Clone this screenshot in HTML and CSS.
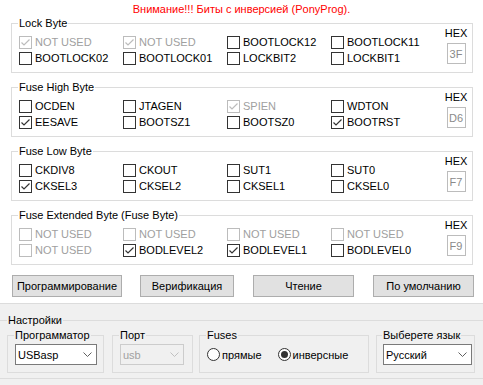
FILE: index.html
```html
<!DOCTYPE html>
<html>
<head>
<meta charset="utf-8">
<link rel="stylesheet" href="styles.css">
</head>
<body>
<div class="app">
  <div class="title">Внимание!!! Биты с инверсией (PonyProg).</div>

  <fieldset class="grp">
    <legend>Lock Byte</legend>
    <div class="bits">
      <label class="cb dis"><span class="box"><svg viewBox="0 0 11 11"><polyline points="1.5,5.5 4,8 9.5,2.5"/></svg></span>NOT USED</label>
      <label class="cb dis"><span class="box"><svg viewBox="0 0 11 11"><polyline points="1.5,5.5 4,8 9.5,2.5"/></svg></span>NOT USED</label>
      <label class="cb"><span class="box"></span>BOOTLOCK12</label>
      <label class="cb"><span class="box"></span>BOOTLOCK11</label>
      <label class="cb"><span class="box"></span>BOOTLOCK02</label>
      <label class="cb"><span class="box"></span>BOOTLOCK01</label>
      <label class="cb"><span class="box"></span>LOCKBIT2</label>
      <label class="cb"><span class="box"></span>LOCKBIT1</label>
    </div>
    <div class="hex"><div class="hex-l">HEX</div><div class="hex-v">3F</div></div>
  </fieldset>

  <fieldset class="grp">
    <legend>Fuse High Byte</legend>
    <div class="bits">
      <label class="cb"><span class="box"></span>OCDEN</label>
      <label class="cb"><span class="box"></span>JTAGEN</label>
      <label class="cb dis"><span class="box"><svg viewBox="0 0 11 11"><polyline points="1.5,5.5 4,8 9.5,2.5"/></svg></span>SPIEN</label>
      <label class="cb"><span class="box"></span>WDTON</label>
      <label class="cb"><span class="box"><svg viewBox="0 0 11 11"><polyline points="1.5,5.5 4,8 9.5,2.5"/></svg></span>EESAVE</label>
      <label class="cb"><span class="box"></span>BOOTSZ1</label>
      <label class="cb"><span class="box"></span>BOOTSZ0</label>
      <label class="cb"><span class="box"><svg viewBox="0 0 11 11"><polyline points="1.5,5.5 4,8 9.5,2.5"/></svg></span>BOOTRST</label>
    </div>
    <div class="hex"><div class="hex-l">HEX</div><div class="hex-v">D6</div></div>
  </fieldset>

  <fieldset class="grp">
    <legend>Fuse Low Byte</legend>
    <div class="bits">
      <label class="cb"><span class="box"></span>CKDIV8</label>
      <label class="cb"><span class="box"></span>CKOUT</label>
      <label class="cb"><span class="box"></span>SUT1</label>
      <label class="cb"><span class="box"></span>SUT0</label>
      <label class="cb"><span class="box"><svg viewBox="0 0 11 11"><polyline points="1.5,5.5 4,8 9.5,2.5"/></svg></span>CKSEL3</label>
      <label class="cb"><span class="box"></span>CKSEL2</label>
      <label class="cb"><span class="box"></span>CKSEL1</label>
      <label class="cb"><span class="box"></span>CKSEL0</label>
    </div>
    <div class="hex"><div class="hex-l">HEX</div><div class="hex-v">F7</div></div>
  </fieldset>

  <fieldset class="grp">
    <legend>Fuse Extended Byte (Fuse Byte)</legend>
    <div class="bits">
      <label class="cb dis"><span class="box"></span>NOT USED</label>
      <label class="cb dis"><span class="box"></span>NOT USED</label>
      <label class="cb dis"><span class="box"></span>NOT USED</label>
      <label class="cb dis"><span class="box"></span>NOT USED</label>
      <label class="cb dis"><span class="box"></span>NOT USED</label>
      <label class="cb"><span class="box"><svg viewBox="0 0 11 11"><polyline points="1.5,5.5 4,8 9.5,2.5"/></svg></span>BODLEVEL2</label>
      <label class="cb"><span class="box"><svg viewBox="0 0 11 11"><polyline points="1.5,5.5 4,8 9.5,2.5"/></svg></span>BODLEVEL1</label>
      <label class="cb"><span class="box"></span>BODLEVEL0</label>
    </div>
    <div class="hex"><div class="hex-l">HEX</div><div class="hex-v">F9</div></div>
  </fieldset>

  <div class="btns">
    <button class="btn b1">Программирование</button>
    <button class="btn b2">Верификация</button>
    <button class="btn b3">Чтение</button>
    <button class="btn b4">По умолчанию</button>
  </div>

  <div class="panel">
    <fieldset class="settings">
      <legend>Настройки</legend>
      <div class="srow">
        <fieldset class="sg sg-prog">
          <legend>Программатор</legend>
          <div class="combo w-prog"><span>USBasp</span><svg class="chev" viewBox="0 0 9 5"><polyline points="0.5,0.5 4.5,4.5 8.5,0.5"/></svg></div>
        </fieldset>
        <fieldset class="sg sg-port">
          <legend>Порт</legend>
          <div class="combo dis w-port"><span>usb</span><svg class="chev" viewBox="0 0 9 5"><polyline points="0.5,0.5 4.5,4.5 8.5,0.5"/></svg></div>
        </fieldset>
        <fieldset class="sg sg-fuses">
          <legend>Fuses</legend>
          <div class="radios">
            <label class="rb"><span class="circle"></span>прямые</label>
            <label class="rb"><span class="circle on"></span>инверсные</label>
          </div>
        </fieldset>
        <fieldset class="sg sg-lang">
          <legend>Выберете язык</legend>
          <div class="combo w-lang"><span>Русский</span><svg class="chev" viewBox="0 0 9 5"><polyline points="0.5,0.5 4.5,4.5 8.5,0.5"/></svg></div>
        </fieldset>
      </div>
    </fieldset>
  </div>
</div>
</body>
</html>
```

FILE: styles.css
```css
* { box-sizing: border-box; }
html, body { margin: 0; padding: 0; }
body {
  width: 483px;
  height: 385px;
  overflow: hidden;
  background: #ffffff;
  font-family: "Liberation Sans", Arial, sans-serif;
  font-size: 11px;
  color: #000;
}
.app { display: flex; flex-direction: column; height: 385px; }

.title {
  color: #ff0000;
  text-align: center;
  height: 17px;
  line-height: 13px;
  padding-top: 3px;
}

.grp {
  margin: 0 10px 8px 11px;
  padding: 6px 4px 7px 7px;
  border: 1px solid #dcdcdc;
  height: 56px;
  min-width: 0;
  display: flex;
  align-items: flex-start;
}
.grp legend {
  padding: 0 1px;
  margin-left: -1px;
  line-height: 13px;
}

.bits {
  display: grid;
  grid-template-columns: repeat(4, 104px);
  grid-auto-rows: 13px;
  row-gap: 3px;
}
.cb {
  display: flex;
  align-items: center;
  gap: 3px;
  line-height: 13px;
  white-space: nowrap;
}
.box {
  width: 13px;
  height: 13px;
  border: 1px solid #333333;
  background: #ffffff;
  flex: none;
  display: flex;
}
.box svg { width: 11px; height: 11px; }
.box polyline { fill: none; stroke: #333333; stroke-width: 1.2; }
.cb.dis { color: #a0a0a0; }
.cb.dis .box { border-color: #bcbcbc; }
.cb.dis .box polyline { stroke: #bcbcbc; }

.hex {
  margin: -9px 0 0 9px;
  width: 24px;
  display: flex;
  flex-direction: column;
  align-items: center;
}
.hex-l { line-height: 13px; height: 13px; }
.hex-v {
  margin-top: 3px;
  width: 19px;
  height: 21px;
  border: 1px solid #bcbcbc;
  background: #ffffff;
  color: #8a8a8a;
  display: flex;
  align-items: center;
  justify-content: center;
}

.btns {
  display: flex;
  margin-top: 2px;
  height: 22px;
}
.btn {
  height: 22px;
  padding: 0;
  border: 1px solid #adadad;
  background: #e1e1e1;
  font-family: "Liberation Sans", Arial, sans-serif;
  font-size: 11px;
  color: #000;
}
.b1 { margin-left: 12px; width: 110px; }
.b2 { margin-left: 18px; width: 94px; }
.b3 { margin-left: 19px; width: 101px; }
.b4 { margin-left: 19px; width: 101px; }

.panel {
  margin-top: 6px;
  flex: 1;
  border-top: 1px solid #dcdcdc;
  background: #f0f0f0;
  padding-top: 10px;
}
.settings {
  margin: 0 -1px;
  padding: 2px 0 4px 0;
  border: 1px solid #dcdcdc;
  height: 65px;
  min-width: 0;
}
.settings > legend {
  padding: 0 1px;
  margin-left: 7px;
  line-height: 13px;
}
.srow { display: flex; }

.sg {
  margin: 0;
  padding: 2px 6px 7px 7px;
  border: 1px solid #dcdcdc;
  height: 44px;
  min-width: 0;
}
.sg legend {
  padding: 0 1px;
  margin-left: -1px;
  line-height: 13px;
}
.sg-prog { margin-left: 7px; width: 97px; }
.sg-port { margin-left: 8px; width: 81px; }
.sg-fuses { margin-left: 6px; width: 170px; }
.sg-lang { margin-left: 7px; width: 99px; padding-left: 6px; }

.combo {
  height: 21px;
  border: 1px solid #7a7a7a;
  background: #ffffff;
  display: flex;
  align-items: center;
  justify-content: space-between;
  padding: 0 4px 0 2px;
}
.combo.dis { border-color: #cccccc; background: #f0f0f0; color: #a0a0a0; }
.w-prog { width: 82px; }
.w-port { width: 64px; }
.w-lang { width: 89px; }
.chev { width: 9px; height: 5px; }
.chev polyline { fill: none; stroke: #606060; stroke-width: 1; }
.combo.dis .chev polyline { stroke: #c0c0c0; }

.radios {
  display: flex;
  align-items: center;
  height: 21px;
  gap: 16px;
}
.rb {
  display: flex;
  align-items: center;
  gap: 2px;
  white-space: nowrap;
}
.circle {
  width: 13px;
  height: 13px;
  border: 1px solid #333333;
  border-radius: 50%;
  background: #ffffff;
  display: flex;
  align-items: center;
  justify-content: center;
}
.circle.on::after {
  content: "";
  width: 7px;
  height: 7px;
  border-radius: 50%;
  background: #333333;
}
```
